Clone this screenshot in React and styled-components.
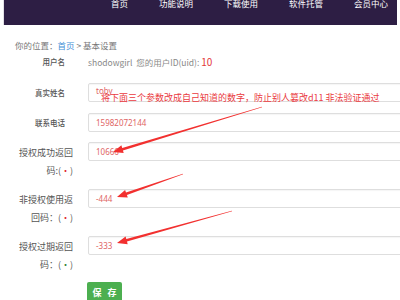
import styled, { createGlobalStyle } from 'styled-components';

const GlobalStyle = createGlobalStyle`
  html, body {
    margin: 0;
    padding: 0;
    background: #ffffff;
    overflow: hidden;
  }
  body {
    font-family: "Noto Sans CJK SC", "Noto Sans", sans-serif;
  }
`;

const navItems = ['首页', '功能说明', '下载使用', '软件托管', '会员中心'];

// arrows painted over the screenshot: tail -> tip
const arrows = [
  { from: [262, 107], to: [113, 152] },
  { from: [183, 174], to: [117, 197] },
  { from: [232, 211], to: [117, 243] },
];

const arrowPoints = ({ from, to }) => {
  const [x1, y1] = from;
  const [x2, y2] = to;
  const len = Math.hypot(x2 - x1, y2 - y1);
  const ux = (x2 - x1) / len;
  const uy = (y2 - y1) / len;
  const nx = -uy;
  const ny = ux;
  const bx = x2 - ux * 10;
  const by = y2 - uy * 10;
  const p = (x, y, w) => `${(x + nx * w).toFixed(1)},${(y + ny * w).toFixed(1)}`;
  return [
    p(x1, y1, 0.2),
    p(bx, by, 1.3),
    p(bx, by, 4),
    `${x2},${y2}`,
    p(bx, by, -4),
    p(bx, by, -1.3),
    p(x1, y1, -0.2),
  ].join(' ');
};

const App = () => {
  return (
    <>
      <GlobalStyle />
      <Page>
        <Header>
          <Nav>
            {navItems.map((item) => (
              <NavItem key={item}>{item}</NavItem>
            ))}
          </Nav>
        </Header>

        <Breadcrumb>
          你的位置：<Crumb>首页</Crumb> &gt; 基本设置
        </Breadcrumb>

        <Form>
          <UserRow>
            <Label>用户名</Label>
            <UserInfo>
              shodowgirl&nbsp;&nbsp;您的用户ID(uid): <Uid>10</Uid>
            </UserInfo>
          </UserRow>

          <Row $space={11}>
            <Label>真实姓名</Label>
            <Input $top>toby</Input>
          </Row>
          <Row $space={10}>
            <Label>联系电话</Label>
            <Input>15982072144</Input>
          </Row>
          <Row $space={9}>
            <Label $wide>
              授权成功返回码:(<Dot>•</Dot>)
            </Label>
            <Input>10666</Input>
          </Row>
          <Row $space={9}>
            <Label $wide>
              非授权使用返回码：(<Dot>•</Dot>)
            </Label>
            <Input>-444</Input>
          </Row>
          <Row $space={8}>
            <Label $wide>
              授权过期返回码：(<Dot $green>•</Dot>)
            </Label>
            <Input>-333</Input>
          </Row>

          <ButtonRow>
            <SaveButton>保 存</SaveButton>
          </ButtonRow>

          <Note>将下面三个参数改成自己知道的数字，防止别人篡改d11 非法验证通过</Note>
        </Form>

        <Overlay viewBox="0 0 400 300" width="400" height="300">
          {arrows.map((a, i) => (
            <polygon key={i} points={arrowPoints(a)} fill="#f2302f" />
          ))}
        </Overlay>
      </Page>
    </>
  );
};

const Page = styled.div`
  position: relative;
  width: 400px;
  height: 300px;
  overflow: hidden;
`;

const Header = styled.header`
  margin: 0 3px;
  height: 25px;
  background: #2d1e44;
  overflow: hidden;
  border-left: 1px solid #e2e0e6;
`;

const Nav = styled.nav`
  display: flex;
  justify-content: flex-end;
  gap: 31px;
  padding-right: 9px;
  margin-top: -1px;
`;

const NavItem = styled.span`
  color: #ffffff;
  font-size: 8.5px;
  line-height: 9px;
  white-space: nowrap;
`;

const Breadcrumb = styled.div`
  margin-top: 14px;
  padding-left: 15px;
  font-size: 8.5px;
  line-height: 12px;
  color: #777;
`;

const Crumb = styled.span`
  color: #3f8fd6;
`;

const Form = styled.div`
  position: relative;
  display: flex;
  flex-direction: column;
`;

const Row = styled.div`
  display: grid;
  grid-template-columns: 73px 1fr;
  column-gap: 15px;
  align-items: start;
  margin-bottom: ${(p) => p.$space}px;
`;

const UserRow = styled(Row)`
  margin-top: 1px;
  margin-bottom: 12px;
  align-items: center;
`;

const Label = styled.div`
  box-sizing: border-box;
  text-align: right;
  color: #555;
  font-size: ${(p) => (p.$wide ? '9px' : '7.5px')};
  line-height: ${(p) => (p.$wide ? '18px' : '19px')};
  padding: ${(p) => (p.$wide ? '2px 0 0 17px' : '0 8px 0 0')};
  ${(p) => (p.$wide ? '' : 'font-weight: 500;')}
`;

const Dot = styled.span`
  color: ${(p) => (p.$green ? '#2e7d32' : '#e0262c')};
`;

const UserInfo = styled.div`
  font-size: 8.5px;
  line-height: 12px;
  color: #888;
  white-space: nowrap;
`;

const Uid = styled.span`
  color: #e4393c;
  font-size: 10px;
`;

const Input = styled.div`
  box-sizing: border-box;
  width: 318px;
  height: 19px;
  border: 1px solid #dedede;
  border-radius: 2px;
  box-shadow: inset 0 1px 1px rgba(0, 0, 0, 0.04);
  padding: ${(p) => (p.$top ? '1px 7px 0' : '0 7px')};
  font-family: "Noto Sans", "Noto Sans CJK SC", sans-serif;
  font-size: 8px;
  line-height: ${(p) => (p.$top ? '12px' : '17px')};
  color: #e06464;
`;

const ButtonRow = styled.div`
  display: flex;
  padding-left: 87px;
`;

const SaveButton = styled.button`
  width: 35px;
  height: 21px;
  padding: 0 0 0 2px;
  border: none;
  border-radius: 2px;
  background: #4caf50;
  color: #ffffff;
  font-family: "Noto Sans CJK SC", sans-serif;
  font-size: 9px;
  font-weight: 700;
  letter-spacing: 2px;
  white-space: pre;
`;

const Note = styled.div`
  position: absolute;
  left: 101px;
  top: 41px;
  font-size: 9px;
  line-height: 12px;
  color: #ea3a3e;
  white-space: nowrap;
`;

const Overlay = styled.svg`
  position: absolute;
  left: 0;
  top: 0;
  pointer-events: none;
`;

export default App;
